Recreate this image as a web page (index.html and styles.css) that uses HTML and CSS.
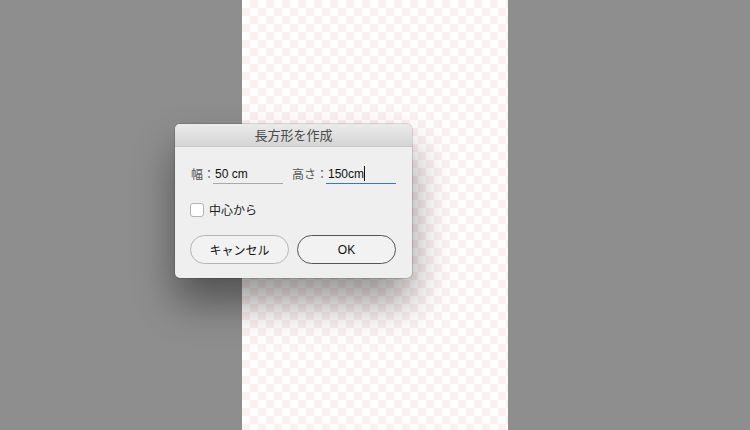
FILE: index.html
```html
<!DOCTYPE html>
<html lang="ja">
<head>
<meta charset="utf-8">
<link rel="stylesheet" href="styles.css">
</head>
<body>
<div class="stage">
  <div class="side"></div>
  <div class="canvas"></div>
  <div class="side side-right"></div>
  <div class="dialog">
    <div class="titlebar">長方形を作成</div>
    <div class="body">
      <div class="fields">
        <label class="field">
          <span class="lbl lbl-w">幅：</span>
          <span class="input">50 cm</span>
        </label>
        <label class="field">
          <span class="lbl lbl-h">高さ：</span>
          <span class="input active">150cm<span class="caret"></span></span>
        </label>
      </div>
      <div class="check-row">
        <span class="checkbox"></span>
        <span class="check-label">中心から</span>
      </div>
      <div class="buttons">
        <button class="btn btn-cancel">キャンセル</button>
        <button class="btn btn-ok">OK</button>
      </div>
    </div>
  </div>
</div>
</body>
</html>
```
FILE: styles.css
```css
html, body {
  margin: 0;
  padding: 0;
  width: 750px;
  height: 430px;
  overflow: hidden;
  font-family: "Liberation Sans", "Noto Sans CJK JP", sans-serif;
}
.stage {
  position: relative;
  display: flex;
  width: 750px;
  height: 430px;
  background: #8e8e8e;
}
.side {
  width: 242px;
  background: #8e8e8e;
}
.side-right {
  flex: 1;
}
.canvas {
  width: 266px;
  background-color: #ffffff;
  background-image: conic-gradient(#fdf0f0 0 25%, #ffffff 0 50%, #fdf0f0 0 75%, #ffffff 0);
  background-size: 16px 16px;
}
.dialog {
  position: absolute;
  left: 175px;
  top: 124px;
  width: 237px;
  height: 154px;
  border-radius: 5px;
  background: #efefef;
  box-shadow: 0 0 0 0.5px rgba(0,0,0,0.25), 0 24px 40px rgba(0,0,0,0.42);
  overflow: hidden;
  display: flex;
  flex-direction: column;
}
.titlebar {
  height: 22px;
  line-height: 22px;
  text-align: center;
  font-size: 13px;
  color: #4a4a4a;
  background: linear-gradient(#ebebeb, #d5d5d5);
  border-bottom: 1px solid #c8c8c8;
  font-family: "Noto Sans CJK JP", sans-serif;
}
.body {
  padding: 18px 0 0 16px;
  display: flex;
  flex-direction: column;
}
.fields {
  display: flex;
  gap: 9px;
}
.field {
  display: flex;
  align-items: flex-end;
  flex-shrink: 0;
}
.lbl {
  font-family: "Noto Sans CJK JP", sans-serif;
  font-size: 12px;
  color: #555;
  line-height: 18px;
  padding-bottom: 1px;
  white-space: nowrap;
  flex-shrink: 0;
}
.lbl-w { width: 22px; }
.lbl-h { width: 34px; }
.input {
  position: relative;
  width: 68px;
  height: 18px;
  line-height: 18px;
  padding-left: 2px;
  font-size: 12px;
  color: #111;
  white-space: nowrap;
  border-bottom: 1px solid #a9a9a9;
  flex-shrink: 0;
}
.input.active {
  border-bottom-color: #2f76dd;
}
.caret {
  display: inline-block;
  width: 1px;
  height: 15px;
  background: #111;
  vertical-align: -3px;
}
.check-row {
  display: flex;
  align-items: center;
  height: 14px;
  margin-top: 19px;
  margin-left: -1px;
}
.checkbox {
  width: 12px;
  height: 12px;
  border: 1px solid #b3b3b3;
  border-radius: 3px;
  background: #fff;
  flex-shrink: 0;
}
.check-label {
  font-family: "Noto Sans CJK JP", sans-serif;
  font-size: 12px;
  line-height: 14px;
  color: #222;
  margin-left: 5px;
}
.buttons {
  display: flex;
  gap: 8px;
  margin-top: 18px;
  margin-left: -1px;
}
.btn {
  width: 99px;
  height: 29px;
  border-radius: 15px;
  background: #f2f2f2;
  font-size: 12px;
  color: #111;
  padding: 0;
}
.btn-cancel {
  border: 1px solid #b4b4b4;
  font-family: "Noto Sans CJK JP", sans-serif;
}
.btn-ok {
  border: 1px solid #555;
  font-family: "Liberation Sans", sans-serif;
}
```
